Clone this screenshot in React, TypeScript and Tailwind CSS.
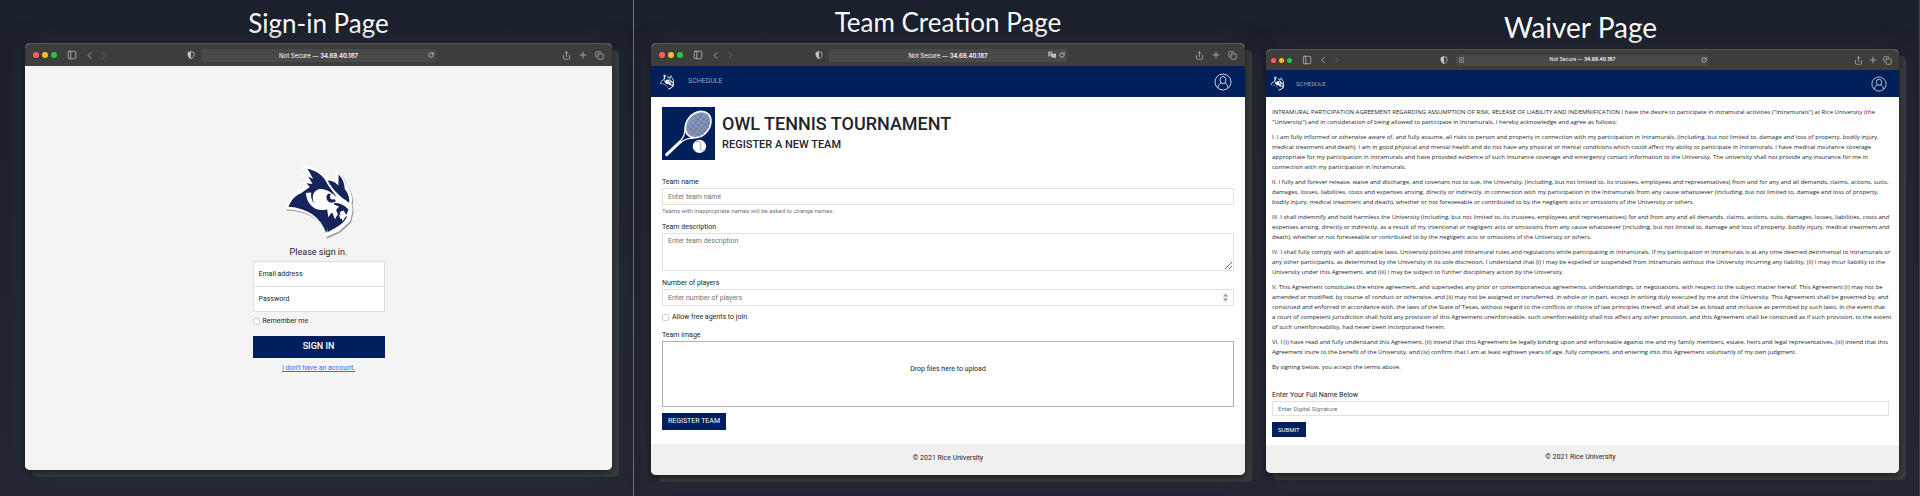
import type { ReactNode } from "react";
import { ChevronLeft, ChevronRight, Copy, PanelLeft, Plus, RotateCw, Share } from "lucide-react";

const waiver: string[][] = [
  [
    "INTRAMURAL PARTICIPATION AGREEMENT REGARDING ASSUMPTION OF RISK, RELEASE OF LIABILITY AND INDEMNIFICATION I have the desire to participate in intramural activities (\"Intramurals\") at Rice University (the",
    "\"University\") and in consideration of being allowed to participate in Intramurals, I hereby acknowledge and agree as follows:",
  ],
  [
    "I. I am fully informed or otherwise aware of, and fully assume, all risks to person and property in connection with my participation in Intramurals, (including, but not limited to, damage and loss of property, bodily injury,",
    "medical treatment and death). I am in good physical and mental health and do not have any physical or mental conditions which could affect my ability to participate in Intramurals. I have medical insurance coverage",
    "appropriate for my participation in Intramurals and have provided evidence of such insurance coverage and emergency contact information to the University. The university shall not provide any insurance for me in",
    "connection with my participation in Intramurals.",
  ],
  [
    "II. I fully and forever release, waive and discharge, and covenant not to sue, the University, (including, but not limited to, its trustees, employees and representatives) from and for any and all demands, claims, actions, suits,",
    "damages, losses, liabilities, costs and expenses arising, directly or indirectly, in connection with my participation in the Intramurals from any cause whatsoever (including, but not limited to, damage and loss of property,",
    "bodily injury, medical treatment and death), whether or not foreseeable or contributed to by the negligent acts or omissions of the University or others.",
  ],
  [
    "III. I shall indemnify and hold harmless the University (including, but not limited to, its trustees, employees and representatives) for and from any and all demands, claims, actions, suits, damages, losses, liabilities, costs and",
    "expenses arising, directly or indirectly, as a result of my intentional or negligent acts or omissions from any cause whatsoever (including, but not limited to, damage and loss of property, bodily injury, medical treatment and",
    "death), whether or not foreseeable or contributed to by the negligent acts or omissions of the University or others.",
  ],
  [
    "IV. I shall fully comply with all applicable laws, University policies and Intramural rules and regulations while participating in Intramurals. If my participation in Intramurals is at any time deemed detrimental to Intramurals or",
    "any other participants, as determined by the University in its sole discretion, I understand that (i) I may be expelled or suspended from Intramurals without the University incurring any liability, (ii) I may incur liability to the",
    "University under this Agreement, and (iii) I may be subject to further disciplinary action by the University.",
  ],
  [
    "V. This Agreement constitutes the entire agreement, and supersedes any prior or contemporaneous agreements, understandings, or negotiations, with respect to the subject matter hereof. This Agreement (i) may not be",
    "amended or modified, by course of conduct or otherwise, and (ii) may not be assigned or transferred, in whole or in part, except in writing duly executed by me and the University. This Agreement shall be governed by, and",
    "construed and enforced in accordance with, the laws of the State of Texas, without regard to the conflicts or choice of law principles thereof, and shall be as broad and inclusive as permitted by such laws. In the event that",
    "a court of competent jurisdiction shall hold any provision of this Agreement unenforceable, such unenforceability shall not affect any other provision, and this Agreement shall be construed as if such provision, to the extent",
    "of such unenforceability, had never been incorporated herein.",
  ],
  [
    "VI. I (i) have read and fully understand this Agreement, (ii) intend that this Agreement be legally binding upon and enforceable against me and my family members, estate, heirs and legal representatives, (iii) intend that this",
    "Agreement inure to the benefit of the University, and (iv) confirm that I am at least eighteen years of age, fully competent, and entering into this Agreement voluntarily of my own judgment.",
  ],
  ["By signing below, you accept the terms above."],
];

function Owl({ className, line = false }: { className: string; line?: boolean }) {
  const ink = line ? "#001f5b" : "#17245a";
  return (
    <svg viewBox="38 18 212 224" className={className} aria-hidden="true">
      {!line && (
        <path
          transform="translate(3 4)"
          fill="#9a9a9a"
          d="M96 24c28 5 47 17 66 34l32 14-3-40c17 15 27 29 32 46 12 16 17 30 19 50l-2 10 3 19-7 32-32 30-40 18-2-20c-20-38-57-62-118-63l18-38c12-12 24-20 36-25l-2-14 8-6-14-14 12-4z"
        />
      )}
      <path
        fill="#fff"
        d="M96 24c28 5 47 17 66 34l32 14-3-40c17 15 27 29 32 46 12 16 17 30 19 50l-2 10 3 19-7 32-32 30-40 18-2-20c-20-38-57-62-118-63l18-38c12-12 24-20 36-25l-2-14 8-6-14-14 12-4z"
      />
      <path
        fill={ink}
        d="M110 35c24 5 40 16 51 31 8 16 22 34 36 54-15-16-36-29-54-25-18 6-22 25-12 45-8-10-12-22-10-35l-30 2 26-18-10-11 18 2-13-22 15 7z"
      />
      <path fill={ink} d="M163 70c14-1 26 2 38 14l1-32c14 15 17 29 18 43 12 15 14 26 13 40-7-4-10-8-19-13-19-17-35-32-51-52z" />
      <path fill={ink} d="M54 147c9-19 18-36 51-44 1 24 11 40 28 50 12 4 24 5 35 1l6 41-9 29c-16-47-55-73-111-77z" />
      <path fill={ink} d="M166 186c8-11 12-19 17-22l8 20 10-18 6 17 20-9c-7 20-28 32-58 48z" />
      <path fill={ink} d="M172 108c-7 5-8 15-2 22 7 7 16 6 24 0l-5-6c-5 3-9 2-12-2-2-5-1-9 3-12z" />
      <path fill={ink} d="M188 135c17 1 31 6 43 20l-7 17-7-13-9 1 4 13c-9 0-18-8-17-20-4-5-6-10-7-18z" />
      <path fill="none" stroke="#fff" strokeWidth="5" d="M160 58c17 34 40 60 66 78" />
      <path fill="#fff" d="M205 164l11-5 8 14-10 17zM188 140l15 6-8 9-15-1z" />
    </svg>
  );
}

function Racket({ className }: { className: string }) {
  return (
    <svg viewBox="0 0 160 160" className={className} role="img" aria-label="Tennis racket and ball">
      <rect width="160" height="160" fill="#001f5b" />
      <ellipse cx="109" cy="53" rx="34" ry="44" transform="rotate(42 109 53)" fill="#8795b8" stroke="#fff" strokeWidth="5" />
      <g stroke="#4c6192" strokeWidth="1.5" fill="none">
        <path d="M78 60l40 32M82 48l46 38M88 38l48 38M97 28l45 36M108 21l36 29M80 76l44-58M88 86l50-66M99 92l45-59M112 92l34-44" />
      </g>
      <path d="M70 62c0 24-8 32-18 44M96 94c-18 0-30 4-40 14" stroke="#fff" strokeWidth="4" fill="none" />
      <path d="M54 106L14 144" stroke="#fff" strokeWidth="9" strokeLinecap="round" />
      <circle cx="113" cy="119" r="20" fill="#fff" />
      <path d="M101 104c14-1 20 5 15 15-3 9 2 13 12 15" stroke="#8795b8" strokeWidth="3" fill="none" />
    </svg>
  );
}

function Shield() {
  return (
    <svg viewBox="0 0 16 16" className="size-2" aria-hidden="true">
      <path d="M8 1l6 2v5c0 4-3 6-6 7.5C5 14 2 12 2 8V3z" fill="none" stroke="#c4c4c4" strokeWidth="1.5" />
      <path d="M8 1L2 3v5c0 4 3 6 6 7.5z" fill="#c4c4c4" />
    </svg>
  );
}

function Translate() {
  return (
    <svg viewBox="0 0 20 16" className="h-2 w-2.5" aria-hidden="true">
      <path d="M2 1h9v9H6l-3 3v-3H2z" fill="#a0a0a0" />
      <path d="M8 5h10v8h-1v3l-3-3H8z" fill="#e8e8e8" stroke="#494949" />
      <path d="M11 11l2-4 2 4M12 10h2" stroke="#494949" fill="none" />
    </svg>
  );
}

function Toolbar({ compact = false, translate = false }: { compact?: boolean; translate?: boolean }) {
  return (
    <div
      className={
        compact
          ? "grid h-[20px] grid-cols-[3fr_4fr_3fr] items-center bg-[#3d3d3c] text-[#b4b4b4]"
          : "grid h-[22px] grid-cols-[3fr_4fr_3fr] items-center bg-[#3d3d3c] text-[#b4b4b4]"
      }
    >
      <div className={compact ? "flex items-center pr-2 pl-[5px]" : "flex items-center pr-[6px] pl-2"}>
        <span className="flex gap-[3px]">
          <i className={compact ? "size-[5px] rounded-full bg-[#fe5f57]" : "size-[6px] rounded-full bg-[#fe5f57]"} />
          <i className={compact ? "size-[5px] rounded-full bg-[#febb2e]" : "size-[6px] rounded-full bg-[#febb2e]"} />
          <i className={compact ? "size-[5px] rounded-full bg-[#28c840]" : "size-[6px] rounded-full bg-[#28c840]"} />
        </span>
        <PanelLeft className="ml-[10px] size-[10px]" strokeWidth={2} />
        <ChevronLeft className={compact ? "ml-[6px] size-[10px]" : "ml-[7px] size-[11px]"} strokeWidth={2} />
        <ChevronRight className={compact ? "ml-1 size-[10px] text-[#6a6a6a]" : "ml-1 size-[11px] text-[#6a6a6a]"} strokeWidth={2} />
        <span className="ml-auto">
          <Shield />
        </span>
      </div>
      <div
        className={
          compact
            ? "relative flex h-[11px] items-center justify-center rounded-[3px] bg-[#494949] font-[Inter,sans-serif] text-[5px] text-white"
            : "relative flex h-[13px] items-center justify-center rounded-[3px] bg-[#494949] font-[Inter,sans-serif] text-[6px] text-white"
        }
      >
        {compact && (
          <svg viewBox="0 0 10 12" className="absolute left-[3px] h-[6px] w-[5px]" aria-hidden="true">
            <path d="M1 1h8v10H1zM3 4h4M3 6h4M3 8h4" fill="none" stroke="#b4b4b4" />
          </svg>
        )}
        <span>
          Not Secure — <b className="font-semibold">34.69.40.187</b>
        </span>
        <span className="absolute right-[2px] flex items-center gap-[2px]">
          {translate && <Translate />}
          <RotateCw className="size-[6px]" />
        </span>
      </div>
      <div className={compact ? "flex items-center justify-end gap-[5px] pr-[7px]" : "flex items-center justify-end gap-[7px] pr-2"}>
        <Share className="size-[9px]" />
        <Plus className="size-[10px]" />
        <Copy className="size-[9px]" />
      </div>
    </div>
  );
}

function Nav({ compact = false }: { compact?: boolean }) {
  return (
    <nav
      className={
        compact
          ? "flex h-[27px] items-center bg-[#001f5b] pr-3 pl-1 text-[6px] text-[#9aa5c0]"
          : "flex h-[31px] items-center bg-[#001f5b] pr-[13px] pl-2 text-[7px] text-[#9aa5c0]"
      }
    >
      <Owl line className={compact ? "size-[15px]" : "size-4"} />
      <a href="#schedule" className={compact ? "ml-[11px]" : "ml-[13px]"}>
        SCHEDULE
      </a>
      <a href="#account" aria-label="Account" className="ml-auto">
        <svg viewBox="0 0 36 36" className={compact ? "size-4" : "size-[18px]"} fill="none" stroke="#c9d0df" strokeWidth="2">
          <circle cx="18" cy="18" r="16" />
          <ellipse cx="18" cy="14" rx="6" ry="7" />
          <path d="M8 30c0-6 3-9 7-10M28 30c0-6-3-9-7-10" />
        </svg>
      </a>
    </nav>
  );
}

function Window({ children }: { children: ReactNode }) {
  return (
    <div className="flex grow flex-col rounded-[5px] shadow-[0_3px_7px_rgba(0,0,0,0.5),7px_7px_0_#383b3d,2px_4px_24px_#2b303b]">
      <div className="flex grow flex-col overflow-hidden rounded-[5px] border-t border-[#565656] bg-white">{children}</div>
    </div>
  );
}

function Footer({ compact = false }: { compact?: boolean }) {
  return (
    <footer
      className={
        compact
          ? "mt-auto flex h-[28px] items-center justify-center bg-[#f0f0f0] pr-1 pb-[3px] text-[7px]"
          : "mt-auto flex h-[31px] items-center justify-center bg-[#f0f0f0] pb-[3px] text-[7px]"
      }
    >
      © 2021 Rice University
    </footer>
  );
}

const titleClass = "text-center font-[Lato,sans-serif] leading-8 text-white";
const fieldClass = "block w-full border border-[#dfe2e5] bg-white px-[5px] text-[7px] placeholder:text-[#6c757d] outline-none";
const loginFieldClass = "block h-[26px] w-full border border-[#dcdfe2] bg-white px-[5px] outline-none placeholder:text-[#212529]";
const checkClass = "size-[7px] appearance-none rounded-[2px] border border-[#cfcfcf] bg-white";

function SignIn() {
  return (
    <section className="flex flex-col border-r border-[#6d727c] pt-[7px] pr-[21px] pb-[26px] pl-[25px]">
      <h2 className={`${titleClass} mb-1 text-[26px]`}>Sign-in Page</h2>
      <Window>
        <Toolbar />
        <form className="flex grow flex-col items-center justify-center bg-[#f4f4f4] text-[7px]">
          <Owl className="h-[76px] w-[72px]" />
          <h3 className="mt-[6px] text-[9px] leading-[14px]">Please sign in.</h3>
          <div className="mt-[2px] w-[132px]">
            <input aria-label="Email address" type="email" placeholder="Email address" className={loginFieldClass} />
            <input aria-label="Password" type="password" placeholder="Password" className={`${loginFieldClass} -mt-px`} />
            <label className="mt-1 flex h-3 items-center gap-[3px]">
              <input type="checkbox" className={checkClass} />
              Remember me
            </label>
            <button type="button" className="mt-2 h-[22px] w-full bg-[#001f5b] text-[9px] font-medium text-white">
              SIGN IN
            </button>
            <a href="#register" className="mt-1 block text-center leading-3 text-[#1f74fd] underline">
              I don't have an account.
            </a>
          </div>
        </form>
      </Window>
    </section>
  );
}

function TeamCreation() {
  return (
    <section className="flex flex-col pt-[6px] pr-[21px] pb-[21px] pl-[17px]">
      <h2 className={`${titleClass} mb-[5px] text-[26px]`}>Team Creation Page</h2>
      <Window>
        <Toolbar translate />
        <Nav />
        <form className="px-[11px] pt-[10px] text-[7px]">
          <header className="flex gap-[7px]">
            <Racket className="size-[53px]" />
            <div className="pt-[6px]">
              <h3 className="text-[18px] leading-[22px] font-medium">OWL TENNIS TOURNAMENT</h3>
              <h4 className="mt-[3px] text-[11px] leading-[14px] font-medium">REGISTER A NEW TEAM</h4>
            </div>
          </header>
          <label htmlFor="team-name" className="mt-[17px] block leading-[11px]">
            Team name
          </label>
          <input id="team-name" placeholder="Enter team name" className={`${fieldClass} h-[17px]`} />
          <p className="text-[6px] leading-3 text-[#6c757d]">Teams with inappropriate names will be asked to change names.</p>
          <label htmlFor="team-description" className="mt-1 block leading-3">
            Team description
          </label>
          <textarea id="team-description" placeholder="Enter team description" className={`${fieldClass} h-[38px] pt-[2px]`} />
          <label htmlFor="players" className="mt-[6px] block leading-3">
            Number of players
          </label>
          <div className="relative">
            <input id="players" inputMode="numeric" placeholder="Enter number of players" className={`${fieldClass} h-[17px]`} />
            <svg viewBox="0 0 6 12" className="absolute top-1 right-[6px] h-[9px] w-[5px]" aria-hidden="true">
              <rect width="6" height="12" rx="2" fill="#e4e4e4" />
              <path d="M1.500 4.500L3 2.500l1.500 2M1.500 7.500L3 9.500l1.500-2" fill="none" stroke="#333" />
            </svg>
          </div>
          <label className="mt-[5px] flex h-3 items-center gap-[3px]">
            <input type="checkbox" className={checkClass} />
            Allow free agents to join
          </label>
          <label htmlFor="team-image" className="mt-[6px] block leading-3">
            Team image
          </label>
          <button id="team-image" type="button" className="block h-[66px] w-full border border-[#aeb1b4] pb-[9px] text-center">
            Drop files here to upload
          </button>
          <button type="button" className="mt-[6px] mb-3 block h-[17px] bg-[#001f5b] px-[6px] text-white">
            REGISTER TEAM
          </button>
        </form>
        <Footer />
      </Window>
    </section>
  );
}

function Waiver() {
  return (
    <section className="flex flex-col border-r border-[#3c414b] pt-[11px] pr-[20px] pb-[23px]">
      <h2 className={`${titleClass} mb-[6px] pr-1 text-[28px]`}>Waiver Page</h2>
      <Window>
        <Toolbar compact />
        <Nav compact />
        <form className="pt-[10px] pr-[10px] pl-[6px] text-[7px]">
          <div className="flex flex-col gap-[5px] font-[Open_Sans,Roboto,sans-serif] text-[6px] leading-[10px] whitespace-nowrap">
            {waiver.map((lines) => (
              <p key={lines[0]}>
                {lines.map((line) => (
                  <span key={line} className="block">
                    {line}
                  </span>
                ))}
              </p>
            ))}
          </div>
          <label htmlFor="signature" className="mt-[18px] block leading-[11px]">
            Enter Your Full Name Below
          </label>
          <input id="signature" placeholder="Enter Digital Signature" className="block h-[15px] w-full border border-[#dfe2e5] px-[5px] text-[6px] outline-none placeholder:text-[#6c757d]" />
          <button type="button" className="mt-[6px] block h-[15px] bg-[#001f5b] px-[6px] text-[6px] text-white">
            SUBMIT
          </button>
        </form>
        <Footer compact />
      </Window>
    </section>
  );
}

export default function App() {
  return (
    <main className="grid min-h-screen grid-cols-[minmax(0,634fr)_minmax(0,632fr)_minmax(0,654fr)] bg-linear-to-b from-[#1a202c] to-[#222733] font-[Roboto,sans-serif] text-[#212529]">
      <SignIn />
      <TeamCreation />
      <Waiver />
    </main>
  );
}
